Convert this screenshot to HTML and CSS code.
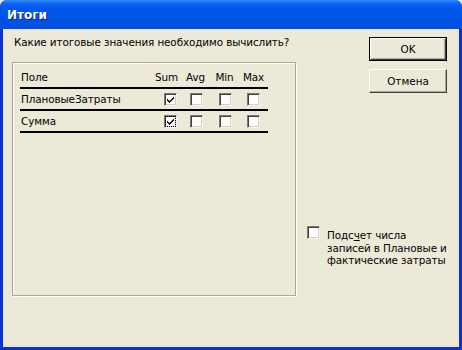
FILE: index.html
```html
<!DOCTYPE html>
<html>
<head>
<meta charset="utf-8">
<link rel="stylesheet" href="styles.css">
</head>
<body>
<div class="window">
  <div class="titlebar"><span class="title">Итоги</span></div>
  <div class="client">
    <div class="main">
      <div class="question">Какие итоговые значения необходимо вычислить?</div>
      <div class="panel">
        <div class="grid">
          <div class="row head">
            <span class="field">Поле</span>
            <span class="col">Sum</span><span class="col">Avg</span><span class="col">Min</span><span class="col">Max</span>
          </div>
          <div class="row">
            <span class="field">ПлановыеЗатраты</span>
            <span class="col"><span class="cb checked"><svg viewBox="0 0 9 9" width="9" height="9"><path d="M1 3.5 L3.5 6 L8 1.5 L8 3.5 L3.5 8 L1 5.5 Z" fill="#000"/></svg></span></span>
            <span class="col"><span class="cb"></span></span>
            <span class="col"><span class="cb"></span></span>
            <span class="col"><span class="cb"></span></span>
          </div>
          <div class="row">
            <span class="field">Сумма</span>
            <span class="col"><span class="cb checked focus"><svg viewBox="0 0 9 9" width="9" height="9"><path d="M1 3.5 L3.5 6 L8 1.5 L8 3.5 L3.5 8 L1 5.5 Z" fill="#000"/></svg></span></span>
            <span class="col"><span class="cb"></span></span>
            <span class="col"><span class="cb"></span></span>
            <span class="col"><span class="cb"></span></span>
          </div>
        </div>
      </div>
    </div>
    <div class="side">
      <div class="buttons">
        <button class="btn default">OK</button>
        <button class="btn">Отмена</button>
      </div>
      <label class="count">
        <span class="cb"></span>
        <span class="count-text">Подс<u>ч</u>ет числа записей в Плановые и фактические затраты</span>
      </label>
    </div>
  </div>
</div>
</body>
</html>
```
FILE: styles.css
```css
html, body {
  margin: 0;
  padding: 0;
  width: 462px;
  height: 350px;
  overflow: hidden;
  background: #ece9d8;
}
.window {
  width: 462px;
  height: 350px;
  box-sizing: border-box;
  display: flex;
  flex-direction: column;
  background: #0831d9;
  border-radius: 7px 7px 0 0;
  font-family: Tahoma, "DejaVu Sans", "Liberation Sans", sans-serif;
  font-size: 11px;
  color: #000;
}
.titlebar {
  height: 29px;
  flex: none;
  display: flex;
  align-items: center;
  padding-left: 7px;
  border-radius: 7px 7px 0 0;
  background: linear-gradient(#3e8cfb 0, #1067f4 3px, #0058ec 8px, #0056e8 16px, #0052e0 24px, #0a4fd8 29px);
}
.title {
  color: #fff;
  font-family: "DejaVu Sans", sans-serif;
  font-weight: bold;
  font-size: 12px;
  text-shadow: 1px 1px 0 #0a1e9a;
  margin-top: 1px;
}
.client {
  flex: 1;
  margin: 0 3px 3px 3px;
  background: #ece9d8;
  display: flex;
  padding: 0 0 0 9px;
}
.main {
  width: 284px;
  display: flex;
  flex-direction: column;
}
.question {
  height: 18px;
  padding-top: 7px;
  padding-left: 2px;
  font-family: "DejaVu Sans", sans-serif;
  font-size: 10.4px;
  letter-spacing: -0.1px;
}
.panel {
  margin-top: 8px;
  height: 234px;
  box-sizing: border-box;
  border: 1px solid #aca899;
  box-shadow: inset 1px 1px 0 #fff, 1px 1px 0 #fff;
  padding: 3px 0 0 7px;
}
.grid {
  width: 248px;
}
.row {
  display: flex;
  align-items: center;
  height: 20px;
  border-bottom: 2px solid #000;
  font-family: "DejaVu Sans", sans-serif;
  font-size: 10.4px;
  letter-spacing: -0.1px;
}
.row.head {
  height: 21px;
}
.field {
  width: 131px;
  padding-left: 1px;
}
.col {
  width: 29px;
  display: flex;
  justify-content: center;
}
.row:not(.head) .col:nth-child(2) { padding-left: 8px; box-sizing: border-box; width: 33px; }
.cb {
  width: 13px;
  height: 13px;
  box-sizing: border-box;
  display: inline-flex;
  align-items: center;
  justify-content: center;
  background: #fff;
  border-top: 1px solid #7a7a7a;
  border-left: 1px solid #7a7a7a;
  border-right: 1px solid #f4f4f0;
  border-bottom: 1px solid #f4f4f0;
  box-shadow: inset 1px 1px 0 #404040, inset -1px -1px 0 #d4d0c8;
  flex: none;
}
.cb.focus { outline: 1px dotted #000; outline-offset: -2px; }
.side {
  flex: 1;
  display: flex;
  flex-direction: column;
  padding-left: 8px;
}
.buttons {
  display: flex;
  flex-direction: column;
  align-items: flex-end;
  padding-right: 12px;
  padding-top: 8px;
  gap: 9px;
}
.btn {
  width: 78px;
  height: 24px;
  box-sizing: border-box;
  background: #ece9d8;
  border-top: 1px solid #fff;
  border-left: 1px solid #fff;
  border-right: 1px solid #404040;
  border-bottom: 1px solid #404040;
  box-shadow: inset -1px -1px 0 #aca899;
  font-family: "DejaVu Sans", sans-serif;
  font-size: 10.4px;
  color: #000;
  padding: 0;
}
.btn.default {
  outline: 1px solid #000;
  outline-offset: 0;
  width: 76px;
  height: 22px;
  margin: 1px 1px 0 0;
}
.count {
  display: flex;
  align-items: flex-start;
  margin-top: 133px;
  margin-left: 3px;
}
.count .cb {
  margin-top: 0;
  margin-right: 7px;
}
.count-text {
  width: 120px;
  padding-top: 3px;
  line-height: 12.5px;
  font-family: "DejaVu Sans", sans-serif;
  font-size: 10.4px;
  letter-spacing: -0.1px;
}
.count-text u { text-decoration: underline; text-underline-offset: 1px; }
```
